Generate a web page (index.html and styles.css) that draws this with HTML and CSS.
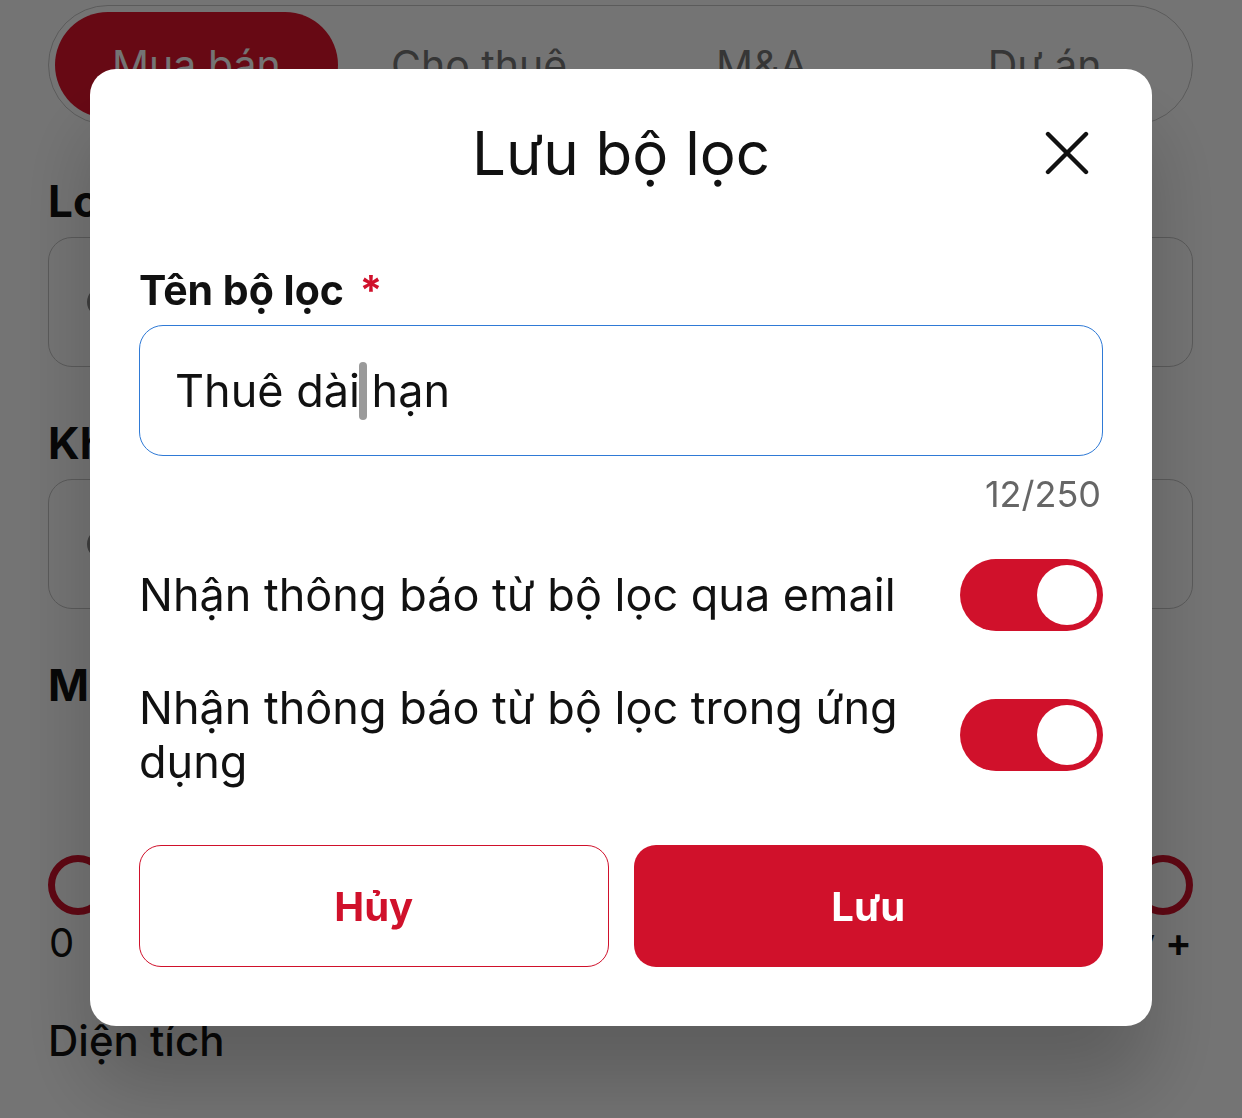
FILE: index.html
```html
<!DOCTYPE html>
<html lang="vi">
<head>
<meta charset="utf-8">
<title>Lưu bộ lọc</title>
<link rel="stylesheet" href="styles.css">
</head>
<body>
<div class="page">
  <div class="tabs">
    <div class="tab tab-active">Mua bán</div>
    <div class="tab">Cho thuê</div>
    <div class="tab">M&amp;A</div>
    <div class="tab">Dự án</div>
  </div>

  <div class="field-label">Loại hình</div>
  <div class="box"><span class="box-icon"></span></div>

  <div class="field-label">Khu vực</div>
  <div class="box"><span class="box-icon"></span></div>

  <div class="field-label">Mức</div>

  <div class="slider">
    <span class="handle"></span>
    <span class="handle"></span>
  </div>
  <div class="slider-values">
    <span>0</span>
    <span>100 tỷ +</span>
  </div>

  <div class="plain-label">Diện tích</div>
</div>

<div class="bottom-bar"><span class="bottom-pill"></span></div>

<div class="overlay">
  <div class="modal">
    <div class="modal-header">
      <h1 class="modal-title">Lưu bộ lọc</h1>
      <button class="close-btn" aria-label="Đóng">
        <svg width="44" height="44" viewBox="0 0 44 44" fill="none">
          <path d="M3 3 L41 41 M41 3 L3 41" stroke="#111" stroke-width="4.4" stroke-linecap="round"/>
        </svg>
      </button>
    </div>

    <div class="name-label">Tên bộ lọc <span class="req">*</span></div>
    <div class="name-input">Thuê dài<span class="caret"></span> hạn</div>
    <div class="counter">12/250</div>

    <div class="toggle-row row-one">
      <div class="toggle-text">Nhận thông báo từ bộ lọc qua email</div>
      <span class="switch"><span class="knob"></span></span>
    </div>
    <div class="toggle-row row-two">
      <div class="toggle-text">Nhận thông báo từ bộ lọc trong ứng dụng</div>
      <span class="switch"><span class="knob"></span></span>
    </div>

    <div class="actions">
      <button class="btn btn-outline">Hủy</button>
      <button class="btn btn-solid">Lưu</button>
    </div>
  </div>
</div>
</body>
</html>
```

FILE: styles.css
```css
* { box-sizing: border-box; }

html, body {
  margin: 0;
  padding: 0;
  width: 1242px;
  height: 1118px;
  overflow: hidden;
  background: #ffffff;
  font-family: Inter, "Noto Sans", sans-serif;
  color: #111;
}

/* ---------- background app ---------- */
.page {
  padding: 5px 49px 0 48px;
}

.tabs {
  height: 120px;
  border: 1.5px solid #c8c8c8;
  border-radius: 60px;
  padding: 6px;
  display: grid;
  grid-template-columns: repeat(4, 1fr);
}

.tab {
  display: flex;
  align-items: center;
  justify-content: center;
  font-size: 41px;
  color: #777;
  border-radius: 54px;
}

.tab-active {
  background: #e2142d;
  color: #ffffff;
}

.field-label {
  margin-top: 50px;
  font-size: 44px;
  line-height: 52px;
  font-weight: 700;
  color: #111;
}

.box {
  margin-top: 10px;
  height: 130px;
  border: 1.5px solid #c6c6c6;
  border-radius: 24px;
  display: flex;
  align-items: center;
  padding-left: 38px;
}

.box-icon {
  width: 30px;
  height: 30px;
  border: 4px solid #8a8a8a;
  border-radius: 50%;
}

.slider {
  margin-top: 144px;
  display: flex;
  justify-content: space-between;
}

.handle {
  width: 60px;
  height: 60px;
  border: 7px solid #d0112b;
  border-radius: 50%;
  background: #fff;
}

.slider-values {
  margin-top: 4px;
  display: flex;
  justify-content: space-between;
  font-size: 40px;
  line-height: 48px;
  color: #111;
}

.slider-values span:first-child { padding-left: 1px; }
.slider-values span:last-child { font-weight: 600; padding-right: 1px; }

.plain-label {
  margin-top: 50px;
  font-size: 42px;
  line-height: 48px;
  font-weight: 500;
  color: #111;
}

.bottom-bar {
  position: fixed;
  left: 0;
  right: 0;
  bottom: 0;
  height: 20px;
  display: flex;
  justify-content: center;
  align-items: flex-end;
}

.bottom-pill {
  width: 180px;
  height: 16px;
  margin-bottom: -2px;
  background: #ffffff;
  border-radius: 28px 28px 0 0;
}

/* ---------- overlay / modal ---------- */
.overlay {
  position: fixed;
  inset: 0;
  background: rgba(0, 0, 0, 0.545);
  display: flex;
  justify-content: center;
  align-items: flex-start;
  padding-top: 69px;
}

.modal {
  width: 1062px;
  height: 957px;
  background: #ffffff;
  border-radius: 26px;
  padding: 48px 49px 0 49px;
  display: flex;
  flex-direction: column;
  box-shadow: 0 60px 80px rgba(0, 0, 0, 0.2);
}

.modal-header {
  height: 72px;
  display: flex;
  align-items: center;
  justify-content: center;
  position: relative;
}

.modal-title {
  margin: 0;
  font-size: 60px;
  line-height: 72px;
  font-weight: 400;
  color: #111;
}

.close-btn {
  position: absolute;
  right: 14px;
  top: 14px;
  width: 44px;
  height: 44px;
  padding: 0;
  border: none;
  background: none;
  display: flex;
}

.name-label {
  margin-top: 77px;
  font-size: 41px;
  line-height: 48px;
  font-weight: 700;
  color: #111;
}

.req {
  color: #d0112b;
  margin-left: 6px;
}

.name-input {
  margin-top: 11px;
  height: 131px;
  border: 1.5px solid #2f7ad6;
  border-radius: 24px;
  padding-left: 35px;
  display: flex;
  align-items: center;
  font-size: 45px;
  line-height: 56px;
  color: #111;
  white-space: pre;
}

.caret {
  display: inline-block;
  width: 8px;
  height: 58px;
  margin: 0 -8px 0 -1px;
  background: #9a9a9a;
  border-radius: 4px;
}

.counter {
  margin-top: 16px;
  text-align: right;
  font-size: 36px;
  line-height: 44px;
  color: #666;
  padding-right: 2px;
}

.toggle-row {
  display: flex;
  align-items: center;
  justify-content: space-between;
  gap: 40px;
}

.row-one { margin-top: 43px; }
.row-two { margin-top: 50px; }

.toggle-text {
  flex: 1;
  font-size: 45px;
  line-height: 54px;
  color: #111;
}

.switch {
  flex: none;
  width: 143px;
  height: 72px;
  border-radius: 36px;
  background: #d0112b;
  padding: 6px;
  display: flex;
  justify-content: flex-end;
}

.knob {
  width: 60px;
  height: 60px;
  border-radius: 50%;
  background: #ffffff;
}

.actions {
  margin-top: 56px;
  display: grid;
  grid-template-columns: 1fr 1fr;
  gap: 25px;
}

.btn {
  height: 122px;
  border-radius: 22px;
  font-family: Inter, "Noto Sans", sans-serif;
  font-size: 40px;
  font-weight: 700;
  cursor: pointer;
}

.btn-outline {
  background: #ffffff;
  border: 1.5px solid #d0112b;
  color: #d0112b;
}

.btn-solid {
  background: #d0112b;
  border: none;
  color: #ffffff;
}
```
